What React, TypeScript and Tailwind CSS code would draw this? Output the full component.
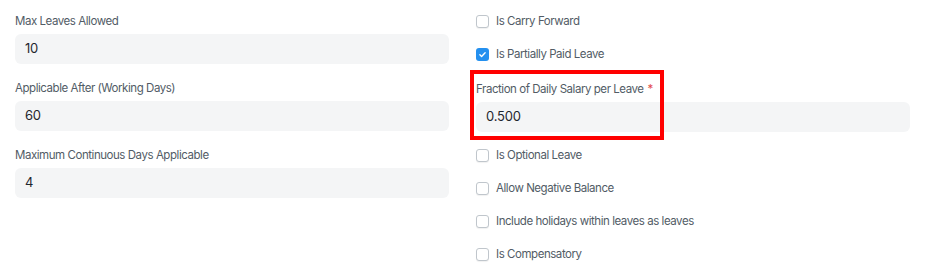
import { useState } from "react";

const font = { fontFamily: "Inter, 'Noto Sans', sans-serif" };

function Field({ label, value, required }: { label: string; value: string; required?: boolean }) {
  return (
    <div>
      <div className="h-4 pt-px text-[11.5px] leading-4 tracking-[-0.45px] text-[#525c66]">
        {label}
        {required && <span className="ml-1 text-[#e24c4c]">*</span>}
      </div>
      <div className="mt-[6px] h-[30px] rounded-[6px] bg-[#f4f5f6] pl-[10px] flex items-center text-[13px] tracking-[-0.2px] text-[#1f272e]">
        {value}
      </div>
    </div>
  );
}

function Check({ label, initial }: { label: string; initial?: boolean }) {
  const [on, setOn] = useState(!!initial);
  return (
    <label className="h-[33px] flex items-center cursor-pointer" onClick={() => setOn(!on)}>
      {on ? (
        <span className="w-[13px] h-[13px] rounded-[3px] bg-[#2490ef] flex items-center justify-center">
          <svg width="9" height="9" viewBox="0 0 12 12" fill="none">
            <path d="M2.5 6.3l2.3 2.3 4.7-5" stroke="white" strokeWidth="1.8" strokeLinecap="round" strokeLinejoin="round" />
          </svg>
        </span>
      ) : (
        <span className="w-[13px] h-[13px] rounded-[3px] border border-[#c0c6cc] bg-white shadow-[0_1px_1px_rgba(0,0,0,0.06)]" />
      )}
      <span className="ml-[7px] pt-px text-[11.5px] tracking-[-0.45px] text-[#525c66]">{label}</span>
    </label>
  );
}

export default function App() {
  return (
    <div style={font} className="w-[927px] h-[273px] bg-white overflow-hidden">
      <div className="grid grid-cols-2 gap-x-[27px] pl-[15px] pr-[17px]">
        <div className="pt-[12px] flex flex-col gap-[15px]">
          <Field label="Max Leaves Allowed" value="10" />
          <Field label="Applicable After (Working Days)" value="60" />
          <Field label="Maximum Continuous Days Applicable" value="4" />
        </div>
        <div className="pt-[5px]">
          <Check label="Is Carry Forward" />
          <Check label="Is Partially Paid Leave" initial />
          <div className="relative pt-[9px] pb-[7px]">
            <Field label="Fraction of Daily Salary per Leave" value="0.500" required />
            <div className="absolute left-[-6px] top-[-1px] w-[194px] h-[70px] border-[4px] border-[#ff0000] pointer-events-none" />
          </div>
          <Check label="Is Optional Leave" />
          <Check label="Allow Negative Balance" />
          <Check label="Include holidays within leaves as leaves" />
          <Check label="Is Compensatory" />
        </div>
      </div>
    </div>
  );
}
